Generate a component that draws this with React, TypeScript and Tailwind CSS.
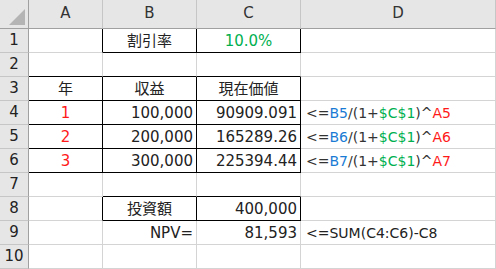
import React from "react";

type Seg = { t: string; c?: string };
type Cell = { segs?: Seg[]; align?: "l" | "c" | "r"; color?: string };

const R = "#ff1a1a";
const G = "#00b050";
const Bl = "#1a7bd4";
const K = "#222222";

const f = (b: string, a: string): Seg[] => [
  { t: "<=", c: "#333333" },
  { t: b, c: Bl },
  { t: "/(1+", c: "#333333" },
  { t: "$C$1", c: G },
  { t: ")^", c: "#333333" },
  { t: a, c: R },
];

const s = (t: string, c = K): Seg[] => [{ t, c }];

const rows: Cell[][] = [
  [{}, { segs: s("割引率"), align: "c" }, { segs: s("10.0%", G), align: "c" }, {}],
  [{}, {}, {}, {}],
  [{ segs: s("年"), align: "c" }, { segs: s("収益"), align: "c" }, { segs: s("現在価値"), align: "c" }, {}],
  [{ segs: s("1", R), align: "c" }, { segs: s("100,000"), align: "r" }, { segs: s("90909.091"), align: "r" }, { segs: f("B5", "A5"), align: "l" }],
  [{ segs: s("2", R), align: "c" }, { segs: s("200,000"), align: "r" }, { segs: s("165289.26"), align: "r" }, { segs: f("B6", "A6"), align: "l" }],
  [{ segs: s("3", R), align: "c" }, { segs: s("300,000"), align: "r" }, { segs: s("225394.44"), align: "r" }, { segs: f("B7", "A7"), align: "l" }],
  [{}, {}, {}, {}],
  [{}, { segs: s("投資額"), align: "c" }, { segs: s("400,000"), align: "r" }, {}],
  [{}, { segs: s("NPV="), align: "r" }, { segs: s("81,593"), align: "r" }, { segs: s("<=SUM(C4:C6)-C8"), align: "l" }],
  [{}, {}, {}, {}],
];

const boxed = (r: number, c: number) => {
  if (r === 0 && (c === 1 || c === 2)) return true;
  if (r >= 2 && r <= 5 && c <= 2) return true;
  if (r === 7 && (c === 1 || c === 2)) return true;
  return false;
};

const FONT = { fontFamily: '"DejaVu Sans", "Noto Sans CJK JP", sans-serif' };

export default function App() {
  const cols = ["A", "B", "C", "D"];
  return (
    <div
      className="grid w-[496px] h-[269px] overflow-hidden bg-white text-[15px] leading-none"
      style={{ ...FONT, gridTemplateColumns: "29px 74px 94px 104px 195px", gridTemplateRows: "29px repeat(10, 24px)" }}
    >
      <div className="relative bg-[#e6e6e6] border-r border-b border-r-[#a0a0a0] border-b-[#a0a0a0]">
        <svg className="absolute left-0 top-0" width="28" height="28" viewBox="0 0 28 28">
          <polygon points="25,9 25,25 9,25" fill="#b4b4b4" />
        </svg>
      </div>
      {cols.map((c) => (
        <div
          key={c}
          className="flex items-center justify-center bg-[#e6e6e6] border-r border-b border-r-[#c6c6c6] border-b-[#a0a0a0] text-[#333] pb-[1px]"
        >
          {c}
        </div>
      ))}
      {rows.map((row, r) => (
        <React.Fragment key={r}>
          <div className="flex items-center justify-center bg-[#e6e6e6] border-r border-b border-r-[#a0a0a0] border-b-[#c6c6c6] text-[#222]">
            {r + 1}
          </div>
          {row.map((cell, c) => {
            const rb = boxed(r, c) || (c < 3 && boxed(r, c + 1));
            const bb = boxed(r, c) || (r < 9 && boxed(r + 1, c));
            const just =
              cell.align === "c" ? "justify-center" : cell.align === "r" ? "justify-end pr-[3px]" : "justify-start pl-[5px]";
            const size = c === 3 ? "text-[14px]" : "";
            return (
              <div
                key={c}
                className={`flex items-center whitespace-nowrap pt-[1px] border-r border-b ${just} ${size} ${rb ? "border-r-black" : "border-r-[#d4d4d4]"} ${bb ? "border-b-black" : "border-b-[#d4d4d4]"}`}
              >
                {cell.segs?.map((sg, i) => (
                  <span key={i} style={{ color: sg.c }}>
                    {sg.t}
                  </span>
                ))}
              </div>
            );
          })}
        </React.Fragment>
      ))}
    </div>
  );
}
